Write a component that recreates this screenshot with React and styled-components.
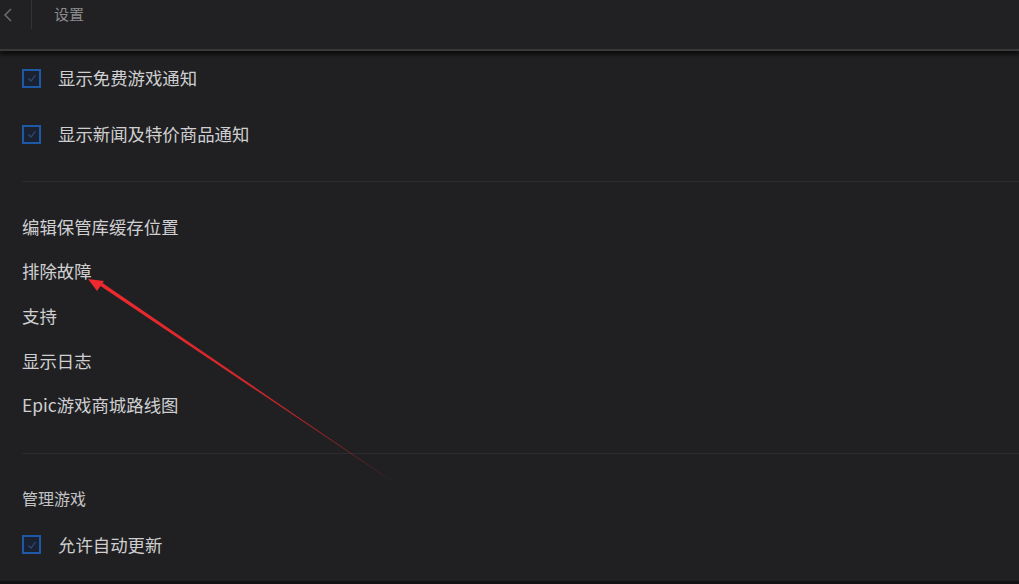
import React from 'react';
import styled, { createGlobalStyle } from 'styled-components';

const GlobalStyle = createGlobalStyle`
  html, body {
    margin: 0;
    padding: 0;
    background: #202022;
    overflow: hidden;
  }
  body {
    font-family: "Noto Sans CJK SC", "Noto Sans", sans-serif;
  }
`;

// whole window
const Page = styled.div`
  position: relative;
  width: 1019px;
  height: 584px;
  background: #202022;
  overflow: hidden;
  border-bottom: 3px solid #121213;
  box-sizing: border-box;
`;

// top bar with back button and title
const Header = styled.div`
  display: flex;
  align-items: flex-start;
  height: 49px;
  background: #212123;
  border-bottom: 2px solid #3a3a3c;
  box-shadow: 0 4px 3px rgba(0, 0, 0, 0.55);
`;

const BackButton = styled.div`
  width: 32px;
  height: 29px;
  display: flex;
  align-items: center;
  padding-left: 2px;
  box-sizing: border-box;
  border-right: 1px solid #333335;
`;

const Title = styled.div`
  margin-left: 22px;
  margin-top: 4px;
  font-size: 15px;
  line-height: 20px;
  color: #8b8b8d;
`;

const Content = styled.div`
  padding: 10px 0 0 22px;
`;

const CheckRow = styled.div`
  display: flex;
  align-items: center;
  gap: 17px;
  height: 34px;
  margin-top: ${(p) => p.$top || 0}px;
  margin-bottom: ${(p) => p.$gap || 0}px;
`;

const Box = styled.div`
  width: 19px;
  height: 19px;
  box-sizing: border-box;
  border: 2.5px solid #1e59a8;
  background: #1a2231;
  display: flex;
  align-items: center;
  justify-content: center;
`;

const Label = styled.span`
  font-size: 17.4px;
  color: #cfcfd1;
  line-height: 24px;
`;

const Divider = styled.div`
  height: 1px;
  background: #2c2c2f;
  margin: ${(p) => p.$margin};
`;

const LinkList = styled.div`
  display: flex;
  flex-direction: column;
`;

const LinkItem = styled.div`
  height: 44.6px;
  display: flex;
  align-items: center;
  font-size: 17.4px;
  color: #cfcfd1;
`;

const SectionTitle = styled.div`
  height: 44px;
  display: flex;
  align-items: center;
  font-size: 16px;
  color: #c4c4c6;
`;

// red annotation arrow drawn over the page
const Arrow = styled.svg`
  position: absolute;
  left: 0;
  top: 0;
  pointer-events: none;
`;

const Checkbox = () => (
  <Box>
    <svg width="10" height="10" viewBox="0 0 10 10">
      <path d="M1.5 5.5 L4 8 L8.5 2" fill="none" stroke="#2d4a75" strokeWidth="1.2" />
    </svg>
  </Box>
);

const links = ['编辑保管库缓存位置', '排除故障', '支持', '显示日志', 'Epic游戏商城路线图'];

export default function App() {
  return (
    <>
      <GlobalStyle />
      <Page>
        <Header>
          <BackButton>
            <svg width="12" height="16" viewBox="0 0 12 16">
              <path d="M9 2 L3 8 L9 14" fill="none" stroke="#6d6d70" strokeWidth="1.5" />
            </svg>
          </BackButton>
          <Title>设置</Title>
        </Header>
        <Content>
          <CheckRow $gap={22}>
            <Checkbox />
            <Label>显示免费游戏通知</Label>
          </CheckRow>
          <CheckRow>
            <Checkbox />
            <Label>显示新闻及特价商品通知</Label>
          </CheckRow>
          <Divider $margin="30px 0 22px" />
          <LinkList>
            {links.map((t) => (
              <LinkItem key={t}>{t}</LinkItem>
            ))}
          </LinkList>
          <Divider $margin="26px 0 22px" />
          <SectionTitle>管理游戏</SectionTitle>
          <CheckRow $top={8}>
            <Checkbox />
            <Label>允许自动更新</Label>
          </CheckRow>
        </Content>
        <Arrow width="1019" height="584" viewBox="0 0 1019 584">
          <defs>
            <linearGradient id="fade" x1="408" y1="492" x2="92" y2="280" gradientUnits="userSpaceOnUse">
              <stop offset="0" stopColor="#b01e22" stopOpacity="0.1" />
              <stop offset="0.12" stopColor="#b82226" stopOpacity="0.6" />
              <stop offset="0.5" stopColor="#dc272b" stopOpacity="0.95" />
              <stop offset="1" stopColor="#ee2a2e" stopOpacity="1" />
            </linearGradient>
          </defs>
          <polygon points="408,492 99,285 101,282" fill="url(#fade)" />
          <polygon points="88,279 104,281 97,291" fill="#ee2a2e" />
        </Arrow>
      </Page>
    </>
  );
}
